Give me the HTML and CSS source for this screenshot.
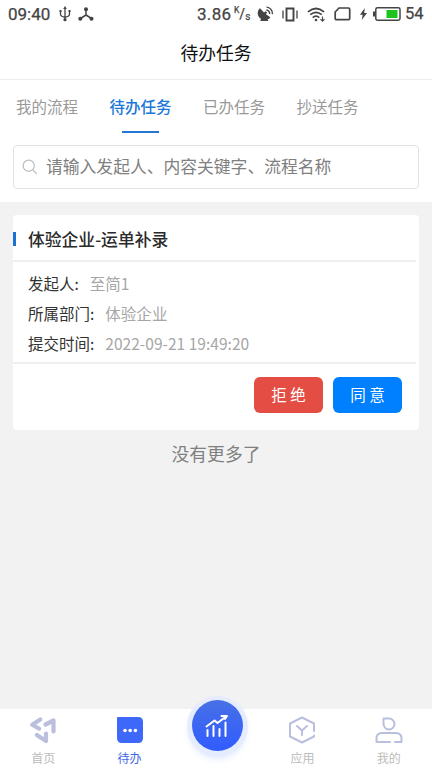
FILE: index.html
```html
<!DOCTYPE html>
<html lang="zh-CN">
<head>
<meta charset="utf-8">
<title>待办任务</title>
<link rel="stylesheet" href="styles.css">
</head>
<body>
<div class="app">
  <div class="status">
    <span class="clock">09:40</span>
    <svg class="usb" width="12" height="16" viewBox="0 0 12 16" fill="none" stroke="#444" stroke-width="1.3"><path d="M6 2v12M1.500 5v3.200q0 2 4.500 3.200q4.500-1.200 4.500-3.200V5"/><path d="M6 0l1.800 3H4.200zM.5 4h2v2h-2zM9.500 4h2v2h-2z" fill="#444" stroke="none"/><circle cx="6" cy="13.700" r="1.600" fill="#444" stroke="none"/></svg>
    <svg class="node" width="16" height="15" viewBox="0 0 16 15" stroke="#444" stroke-width="1.500" fill="#444"><path d="M8 2v6L2.500 11.500M8 8l5.500 3.500" fill="none"/><circle cx="8" cy="2.300" r="1.300"/><circle cx="2.300" cy="11.700" r="1.300"/><circle cx="13.500" cy="11.700" r="1.300"/></svg>
    <span class="speed">3.86</span>
    <span class="unit"><sup>K</sup><i>/</i><sub>s</sub></span>
    <svg class="dish" width="17" height="16" viewBox="0 0 17 16"><path d="M3 2.300A6.300 6.300 0 0 0 4 12.700L3.300 15h8.200l-1-1.500q2-.6 2.800-2.300L8.900 8.200l1.200-1.600-1.600-1.300-1.500 1.200z" fill="#444"/><path d="M9.300 4a3.500 3.500 0 0 1 3.300 4M9.500 1.100a6.500 6.500 0 0 1 6 7" fill="none" stroke="#444" stroke-width="1.400"/></svg>
    <svg class="vibrate" width="16" height="15" viewBox="0 0 16 15" fill="none" stroke="#444"><path d="M4.500 1.500h7v12h-7z" stroke-width="1.900"/><path d="M1 3.500v8M15 3.500v8" stroke-width="1.300"/></svg>
    <svg class="wifi" width="19" height="15" viewBox="0 0 19 15" fill="none" stroke="#444" stroke-width="1.700"><path d="M1 4.800q8-6.600 16 0M3.300 7.700q5.700-4.800 11.400 0M5.700 10.600q3.300-2.900 6.600 0"/><circle cx="9" cy="13" r="1.300" fill="#444" stroke="none"/><path d="M15.500 9.500v5M13.500 12.200l2 2 2-2" stroke-width="1.100"/></svg>
    <svg class="sim" width="17" height="14" viewBox="0 0 17 14" fill="none" stroke="#444" stroke-width="1.700"><path d="M5 1h9.500q1.200 0 1.200 1.200v9.300q0 1.200-1.200 1.200h-12q-1.300 0-1.300-1.200V5z"/></svg>
    <svg class="bolt" width="7" height="12" viewBox="0 0 7 12"><path d="M4.800 0L0 6.700h2.700L1.700 12 7 5H4.200z" fill="#444"/></svg>
    <svg class="battery" width="28" height="14" viewBox="0 0 28 14"><rect x="2.800" y=".8" width="24.200" height="12.400" rx="1.700" fill="none" stroke="#444" stroke-width="1.500"/><path d="M0 4.500h2v5H0z" fill="#444"/><path d="M13.500 3h11v8h-11z" fill="#1fc41b"/></svg>
    <span class="percent">54</span>
  </div>
  <header class="header">待办任务</header>
  <nav class="tabs">
    <span class="tab">我的流程</span>
    <span class="tab active">待办任务</span>
    <span class="tab">已办任务</span>
    <span class="tab">抄送任务</span>
  </nav>
  <div class="search-area">
    <div class="search">
      <svg width="16" height="16" viewBox="0 0 16 16" fill="none" stroke="#b8bbc0" stroke-width="1.200"><circle cx="6.700" cy="6.700" r="5.600"/><path d="M10.800 10.800l4 4"/></svg>
      <span>请输入发起人、内容关键字、流程名称</span>
    </div>
  </div>
  <main class="content">
    <section class="card">
      <h2 class="card-title">体验企业-运单补录</h2>
      <div class="details">
        <div class="row"><span>发起人:</span><span class="value">至简1</span></div>
        <div class="row"><span>所属部门:</span><span class="value">体验企业</span></div>
        <div class="row"><span>提交时间:</span><span class="value">2022-09-21 19:49:20</span></div>
      </div>
      <div class="actions">
        <span class="button reject">拒 绝</span>
        <span class="button agree">同 意</span>
      </div>
    </section>
    <p class="end">没有更多了</p>
  </main>
  <footer class="nav">
    <div class="nav-item">
      <svg width="28" height="28" viewBox="0 0 28 28" fill="none" stroke="#b9bfdc" stroke-width="4.200" stroke-linecap="round" stroke-linejoin="round"><path d="M11.300 3.500L3.200 8.700l7 4M16.500 8.500l8-4V15.500M7.800 19l9.200 6V17.500"/></svg>
      <span>首页</span>
    </div>
    <div class="nav-item selected">
      <svg width="28" height="28" viewBox="0 0 28 28"><path d="M2 1h20q5 0 5 5v16q0 5-5 5H6q-5 0-5-5V2q0-1 1-1z" fill="#3d68fa"/><g fill="#fff"><circle cx="9" cy="14.500" r="1.800"/><circle cx="14.200" cy="14.500" r="1.800"/><circle cx="19.400" cy="14.500" r="1.800"/></g></svg>
      <span>待办</span>
    </div>
    <div class="nav-center">
      <div class="chart-button">
        <svg width="26" height="26" viewBox="0 0 26 26" fill="none" stroke="#fff" stroke-width="2" stroke-linecap="round" stroke-linejoin="round"><path d="M2.500 13.500L10.500 7.500l3 2.500L22 3.500M17.500 3h5.500l-2 3M3.500 17v6M9.500 13v10M15.500 16v7M21.500 9.500v13.500"/></svg>
      </div>
    </div>
    <div class="nav-item">
      <svg width="28" height="28" viewBox="0 0 28 28" fill="none" stroke="#b9bfdc" stroke-width="2" stroke-linecap="round" stroke-linejoin="round"><path d="M26 15V7.500L14 1.500 2 7.500v13l12 6 12-6v-1M9 10l5 4.500 5-4.500M14 14.500V19"/></svg>
      <span>应用</span>
    </div>
    <div class="nav-item">
      <svg width="28" height="28" viewBox="0 0 28 28" fill="none" stroke="#b9bfdc" stroke-width="2" stroke-linecap="round" stroke-linejoin="round"><path d="M8.500 2.500H14a5.500 5.500 0 1 1-5.500 5.500zM15 26H1.500v-3.500q0-5.500 5.500-5.500h14q5.500 0 5.500 5.500V26H20"/></svg>
      <span>我的</span>
    </div>
  </footer>
</div>
</body>
</html>
```
FILE: styles.css
```css
* { box-sizing: border-box; }
body {
  margin: 0;
  font-family: "Noto Sans CJK SC", sans-serif;
  background: #f2f2f2;
}
.app {
  width: 432px;
  height: 768px;
  display: flex;
  flex-direction: column;
  overflow: hidden;
}
.status {
  height: 28px;
  flex: none;
  display: flex;
  align-items: center;
  padding-left: 8px;
  background: #fff;
  color: #444;
  font: 400 17px/28px Roboto, sans-serif;
  -webkit-text-stroke: 0.25px #444;
  white-space: nowrap;
}
.status svg { flex: none; }
.clock { width: 51px; }
.node { margin-left: 7px; }
.speed { margin-left: 103px; width: 36px; letter-spacing: 0.3px; }
.unit {
  display: flex;
  width: 16px;
  height: 16px;
  margin-left: 1px;
}
.unit sup { font-size: 8.500px; line-height: 8px; vertical-align: baseline; }
.unit sub { font-size: 10px; align-self: flex-end; line-height: 11px; }
.unit i { font-size: 14px; line-height: 16px; font-style: normal; }
.dish { margin-left: 7px; }
.vibrate { margin-left: 8px; }
.wifi { margin-left: 9px; }
.sim { margin-left: 8px; }
.bolt { margin-left: 9px; }
.battery { margin-left: 6px; }
.percent { margin-left: 4px; font-size: 16.500px; }
.header {
  height: 52px;
  flex: none;
  background: #fff;
  border-bottom: 1.500px solid #ececec;
  color: #111;
  font-size: 17.800px;
  line-height: 49px;
  text-align: center;
}
.tabs {
  height: 53px;
  flex: none;
  display: flex;
  gap: 31.500px;
  padding-left: 16px;
  background: #fff;
}
.tab {
  height: 52px;
  display: flex;
  flex-direction: column;
  align-items: center;
  color: #999;
  font-size: 15.500px;
  line-height: 53px;
}
.active { color: #1c78d8; font-weight: 500; }
.active::after {
  content: "";
  flex: none;
  width: 37px;
  height: 1.500px;
  margin-top: -2px;
  background: #2477d4;
}
.search-area {
  height: 69px;
  flex: none;
  padding: 12px 13px 0;
  background: #fff;
}
.search {
  height: 44px;
  display: flex;
  align-items: center;
  gap: 8px;
  padding-left: 8px;
  border: 1.500px solid #e2e2e2;
  border-radius: 4px;
  color: #808080;
  font-size: 16.800px;
  line-height: 40px;
}
.search span { margin-top: -2px; }
.content { flex: 1; padding: 13px 13px 0; }
.card {
  height: 215px;
  background: #fff;
  border-radius: 4px;
}
.card-title {
  height: 47px;
  margin: 0 3px 0 0;
  display: flex;
  align-items: center;
  border-bottom: 2px solid #f0f0f0;
  color: #2a2a2a;
  font-size: 16.800px;
  font-weight: 500;
  line-height: 24px;
  padding-top: 3px;
}
.card-title::before {
  content: "";
  width: 3px;
  height: 14px;
  margin-right: 12px;
  background: #1c70d0;
}
.details {
  height: 102px;
  margin-right: 3px;
  padding: 6px 0 0 15px;
  border-bottom: 2px solid #f0f0f0;
}
.row {
  display: flex;
  gap: 11px;
  height: 30px;
  color: #333;
  font-size: 15.500px;
  line-height: 30px;
}
.value { color: #a6a6a6; letter-spacing: 0.03px; }
.actions {
  display: flex;
  justify-content: flex-end;
  gap: 10px;
  padding: 13px 17px 0 0;
}
.button {
  width: 69px;
  height: 36px;
  border-radius: 6px;
  color: #fff;
  font-size: 15.500px;
  line-height: 34px;
  text-align: center;
}
.reject { background: #e34d43; }
.agree { background: #007fff; }
.end {
  margin: 10px 0 0;
  color: #808080;
  font-size: 17.800px;
  line-height: 26px;
  text-align: center;
}
.nav {
  height: 59px;
  flex: none;
  display: grid;
  grid-template-columns: repeat(5, 1fr);
  background: #fff;
}
.nav-item {
  display: flex;
  flex-direction: column;
  align-items: center;
  padding-top: 7px;
  color: #bbb;
  font-size: 12px;
  line-height: 18px;
}
.nav-item span { margin-top: 5px; }
.selected { color: #3d68e8; }
.nav-center { display: flex; justify-content: center; }
.chart-button {
  width: 51px;
  height: 51px;
  margin: -9px 0 0 3px;
  display: flex;
  align-items: center;
  justify-content: center;
  border-radius: 50%;
  background: linear-gradient(#4770e6, #315cff);
  box-shadow: 0 1px 1px 5px #e5ecfd, 0 5px 9px 2px #dce5ff;
}
```
